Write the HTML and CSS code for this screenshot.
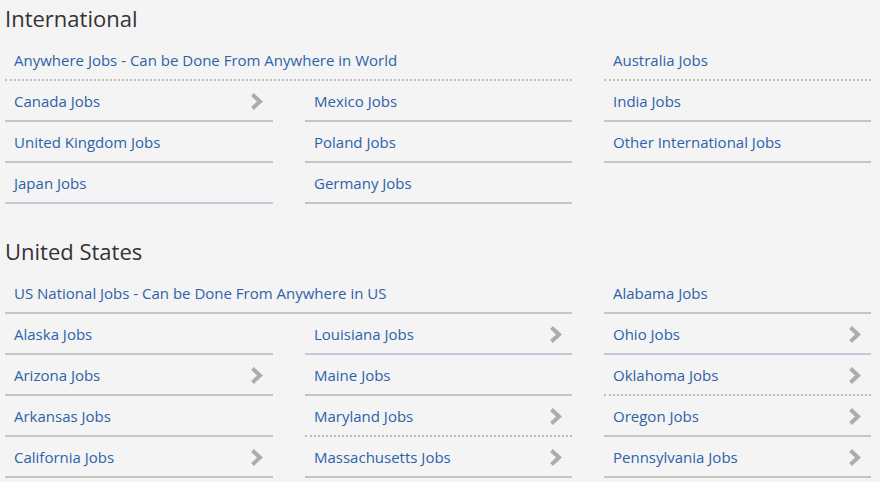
FILE: index.html
```html
<!DOCTYPE html>
<html lang="en">
<head>
<meta charset="utf-8">
<title>Jobs by Location</title>
<link rel="stylesheet" href="styles.css">
</head>
<body>
<div class="page">
  <section class="region">
    <h2 class="region-title">International</h2>
    <div class="region-grid">
      <div class="main-area">
        <a class="item wide dotted" href="#">Anywhere Jobs - Can be Done From Anywhere in World</a>
        <div class="sub-grid">
          <ul class="list">
            <li><a class="item" href="#">Canada Jobs<svg class="chev" viewBox="0 0 13 17"><path d="M2.5 1.5 L10 8.5 L2.5 15.5"/></svg></a></li>
            <li><a class="item" href="#">United Kingdom Jobs</a></li>
            <li><a class="item blue" href="#">Japan Jobs</a></li>
          </ul>
          <ul class="list">
            <li><a class="item" href="#">Mexico Jobs</a></li>
            <li><a class="item" href="#">Poland Jobs</a></li>
            <li><a class="item" href="#">Germany Jobs</a></li>
          </ul>
        </div>
      </div>
      <ul class="list">
        <li><a class="item dotted" href="#">Australia Jobs</a></li>
        <li><a class="item" href="#">India Jobs</a></li>
        <li><a class="item" href="#">Other International Jobs</a></li>
      </ul>
    </div>
  </section>

  <section class="region">
    <h2 class="region-title">United States</h2>
    <div class="region-grid">
      <div class="main-area">
        <a class="item wide" href="#">US National Jobs - Can be Done From Anywhere in US</a>
        <div class="sub-grid">
          <ul class="list">
            <li><a class="item" href="#">Alaska Jobs</a></li>
            <li><a class="item" href="#">Arizona Jobs<svg class="chev" viewBox="0 0 13 17"><path d="M2.5 1.5 L10 8.5 L2.5 15.5"/></svg></a></li>
            <li><a class="item" href="#">Arkansas Jobs</a></li>
            <li><a class="item" href="#">California Jobs<svg class="chev" viewBox="0 0 13 17"><path d="M2.5 1.5 L10 8.5 L2.5 15.5"/></svg></a></li>
          </ul>
          <ul class="list">
            <li><a class="item blue" href="#">Louisiana Jobs<svg class="chev" viewBox="0 0 13 17"><path d="M2.5 1.5 L10 8.5 L2.5 15.5"/></svg></a></li>
            <li><a class="item" href="#">Maine Jobs</a></li>
            <li><a class="item dotted" href="#">Maryland Jobs<svg class="chev" viewBox="0 0 13 17"><path d="M2.5 1.5 L10 8.5 L2.5 15.5"/></svg></a></li>
            <li><a class="item" href="#">Massachusetts Jobs<svg class="chev" viewBox="0 0 13 17"><path d="M2.5 1.5 L10 8.5 L2.5 15.5"/></svg></a></li>
          </ul>
        </div>
      </div>
      <ul class="list">
        <li><a class="item" href="#">Alabama Jobs</a></li>
        <li><a class="item blue" href="#">Ohio Jobs<svg class="chev" viewBox="0 0 13 17"><path d="M2.5 1.5 L10 8.5 L2.5 15.5"/></svg></a></li>
        <li><a class="item dotted" href="#">Oklahoma Jobs<svg class="chev" viewBox="0 0 13 17"><path d="M2.5 1.5 L10 8.5 L2.5 15.5"/></svg></a></li>
        <li><a class="item" href="#">Oregon Jobs<svg class="chev" viewBox="0 0 13 17"><path d="M2.5 1.5 L10 8.5 L2.5 15.5"/></svg></a></li>
        <li><a class="item" href="#">Pennsylvania Jobs<svg class="chev" viewBox="0 0 13 17"><path d="M2.5 1.5 L10 8.5 L2.5 15.5"/></svg></a></li>
      </ul>
    </div>
  </section>
</div>
</body>
</html>
```

FILE: styles.css
```css
* { box-sizing: border-box; }

html, body {
  margin: 0;
  padding: 0;
  background: #f4f4f4;
}

body {
  font-family: "Open Sans", "Noto Sans", sans-serif;
  overflow: hidden;
}

.page {
  width: 866px;
  margin-left: 5px;
}

.region + .region {
  margin-top: 29px;
}

.region-title {
  margin: 0;
  height: 40px;
  line-height: 36px;
  font-size: 22px;
  font-weight: 400;
  color: #333333;
}

.region-grid {
  display: grid;
  grid-template-columns: 567px 267px;
  column-gap: 32px;
}

.sub-grid {
  display: grid;
  grid-template-columns: 268px 267px;
  column-gap: 32px;
}

.list {
  list-style: none;
  margin: 0;
  padding: 0;
}

.item {
  display: flex;
  align-items: center;
  justify-content: space-between;
  height: 41px;
  padding: 1px 10px 0 9px;
  font-size: 15px;
  color: #2e62a9;
  text-decoration: none;
  border-bottom: 2px solid #c6c6c6;
}

.item.dotted {
  border-bottom: 2px dotted #bdbdbd;
}

.item.blue {
  border-bottom-color: #c3c9d6;
}

.chev {
  width: 13px;
  height: 17px;
  flex: none;
}

.chev path {
  fill: none;
  stroke: #acacac;
  stroke-width: 4;
}
```
